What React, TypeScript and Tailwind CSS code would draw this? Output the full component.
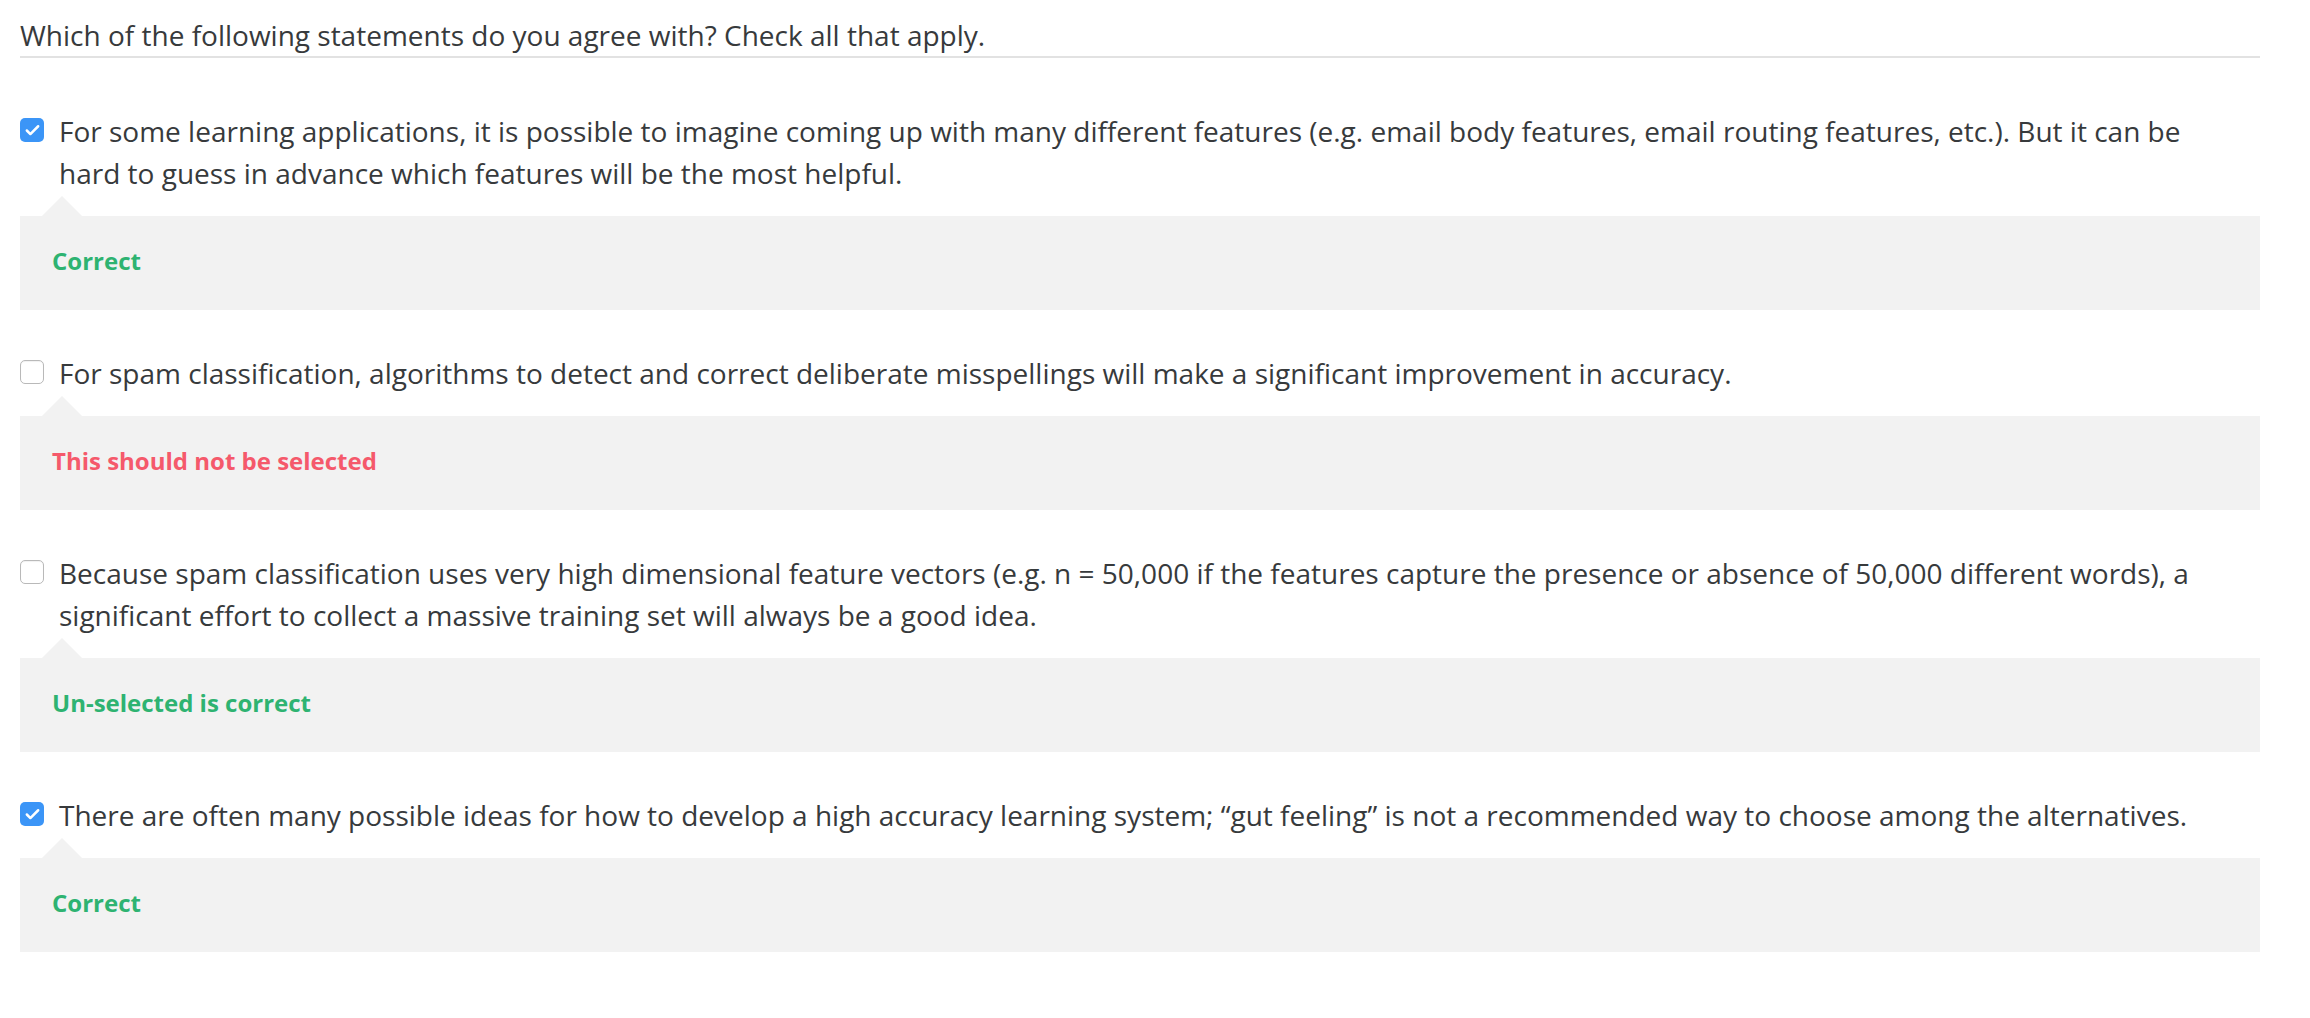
import { Check } from "lucide-react";

type Item = {
  text: string;
  checked: boolean;
  feedback: string;
  ok: boolean;
};

const items: Item[] = [
  {
    text: "For some learning applications, it is possible to imagine coming up with many different features (e.g. email body features, email routing features, etc.). But it can be hard to guess in advance which features will be the most helpful.",
    checked: true,
    feedback: "Correct",
    ok: true,
  },
  {
    text: "For spam classification, algorithms to detect and correct deliberate misspellings will make a significant improvement in accuracy.",
    checked: false,
    feedback: "This should not be selected",
    ok: false,
  },
  {
    text: "Because spam classification uses very high dimensional feature vectors (e.g. n = 50,000 if the features capture the presence or absence of 50,000 different words), a significant effort to collect a massive training set will always be a good idea.",
    checked: false,
    feedback: "Un-selected is correct",
    ok: true,
  },
  {
    text: "There are often many possible ideas for how to develop a high accuracy learning system; \u201cgut feeling\u201d is not a recommended way to choose among the alternatives.",
    checked: true,
    feedback: "Correct",
    ok: true,
  },
];

const Box = ({ checked }: { checked: boolean }) =>
  checked ? (
    <div className="w-[24px] h-[24px] shrink-0 mt-[8px] rounded-[5px] bg-[#3b95f7] flex items-center justify-center">
      <Check size={17} strokeWidth={3.5} color="#ffffff" />
    </div>
  ) : (
    <div className="w-[24px] h-[24px] shrink-0 mt-[8px] rounded-[5px] bg-white border border-[#b9b9b9] shadow-[inset_0_1px_1px_rgba(0,0,0,0.06)]" />
  );

const Option = ({ item }: { item: Item }) => (
  <div>
    <div className="flex gap-[15px]">
      <Box checked={item.checked} />
      <p className="text-[28px] leading-[42px] pr-[30px]">{item.text}</p>
    </div>
    <div className="relative mt-[22px] bg-[#f2f2f2] h-[94px] pl-[32px] pt-[30px]">
      <div className="absolute -top-[20px] left-[22px] w-0 h-0 border-l-[20px] border-r-[20px] border-b-[20px] border-l-transparent border-r-transparent border-b-[#f2f2f2]" />
      <span
        className={`text-[24px] leading-[30px] font-bold ${item.ok ? "text-[#2eb371]" : "text-[#f5596b]"}`}
      >
        {item.feedback}
      </span>
    </div>
  </div>
);

export default function App() {
  return (
    <div className="min-h-[1018px] w-[2310px] bg-white text-[#373a3c] font-['Open_Sans',sans-serif]">
      <div className="ml-[20px] w-[2240px] pt-[14px]">
        <h2 className="text-[28px] leading-[42px] font-normal border-b-2 border-[#e2e2e2]">
          Which of the following statements do you agree with? Check all that apply.
        </h2>
        <div className="mt-[52px] flex flex-col gap-[42px]">
          {items.map((item, i) => (
            <Option key={i} item={item} />
          ))}
        </div>
      </div>
    </div>
  );
}
